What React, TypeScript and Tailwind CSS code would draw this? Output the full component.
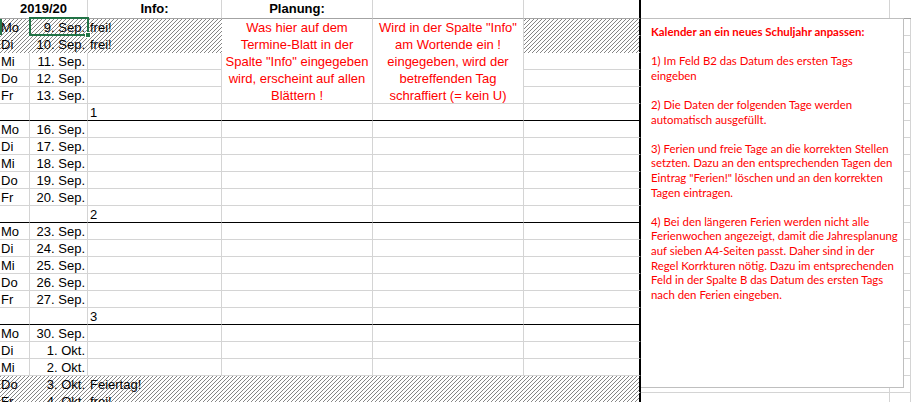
type Day = { day: string; date: string; info?: string; off?: boolean };
type Week = { nr?: number; days: Day[] };

const weeks: Week[] = [
  {
    nr: 1,
    days: [
      { day: 'Mo', date: '9. Sep.', info: 'frei!', off: true },
      { day: 'Di', date: '10. Sep.', info: 'frei!', off: true },
      { day: 'Mi', date: '11. Sep.' },
      { day: 'Do', date: '12. Sep.' },
      { day: 'Fr', date: '13. Sep.' },
    ],
  },
  {
    nr: 2,
    days: [
      { day: 'Mo', date: '16. Sep.' },
      { day: 'Di', date: '17. Sep.' },
      { day: 'Mi', date: '18. Sep.' },
      { day: 'Do', date: '19. Sep.' },
      { day: 'Fr', date: '20. Sep.' },
    ],
  },
  {
    nr: 3,
    days: [
      { day: 'Mo', date: '23. Sep.' },
      { day: 'Di', date: '24. Sep.' },
      { day: 'Mi', date: '25. Sep.' },
      { day: 'Do', date: '26. Sep.' },
      { day: 'Fr', date: '27. Sep.' },
    ],
  },
  {
    days: [
      { day: 'Mo', date: '30. Sep.' },
      { day: 'Di', date: '1. Okt.' },
      { day: 'Mi', date: '2. Okt.' },
      { day: 'Do', date: '3. Okt.', info: 'Feiertag!', off: true },
      { day: 'Fr', date: '4. Okt.', info: 'frei!', off: true },
    ],
  },
];

const noteLines = [
  '',
  '1) Im Feld B2 das Datum des ersten Tags',
  'eingeben',
  '',
  '2) Die Daten der folgenden Tage werden',
  'automatisch ausgefüllt.',
  '',
  '3) Ferien und freie Tage an die korrekten Stellen',
  'setzten. Dazu an den entsprechenden Tagen den',
  'Eintrag "Ferien!" löschen und an den korrekten',
  'Tagen eintragen.',
  '',
  '4) Bei den längeren Ferien werden nicht alle',
  'Ferienwochen angezeigt, damit die Jahresplanung',
  'auf sieben A4-Seiten passt. Daher sind in der',
  'Regel Korrkturen nötig. Dazu im entsprechenden',
  'Feld in der Spalte B das Datum des ersten Tags',
  'nach den Ferien eingeben.',
];

const HATCH =
  'bg-[image:repeating-linear-gradient(135deg,#858585_0px,#858585_1px,#ffffff_1px,#ffffff_2.83px)] bg-fixed';

// one spreadsheet cell; borders are chosen as full class names
function Cell({
  hatch,
  black,
  edge,
  className = '',
  children,
}: {
  hatch?: boolean;
  black?: boolean;
  edge?: boolean;
  className?: string;
  children?: React.ReactNode;
}) {
  const right = edge
    ? 'border-r-2 border-r-black'
    : hatch
      ? 'border-r border-r-transparent'
      : 'border-r border-r-[#d4d4d4]';
  const bottom = black
    ? 'border-b border-b-black'
    : hatch
      ? 'border-b border-b-transparent'
      : 'border-b border-b-[#d4d4d4]';
  return (
    <div className={`${right} ${bottom} whitespace-nowrap ${hatch ? HATCH : ''} ${className}`}>
      {children}
    </div>
  );
}

function DayRow({ d, first, inFirstWeek }: { d: Day; first: boolean; inFirstWeek: boolean }) {
  const h = !!d.off;
  return (
    <>
      <Cell hatch={h} className="pl-[1px]">{d.day}</Cell>
      <Cell hatch={h} className="pr-[2px] text-right">{d.date}</Cell>
      <Cell hatch={h} className="pl-[2px]">{d.info}</Cell>
      {inFirstWeek ? (
        first && (
          <>
            <Cell className="row-span-5 text-center text-[#ff0000]">
              Was hier auf dem
              <br />
              Termine-Blatt in der
              <br />
              Spalte "Info" eingegeben
              <br />
              wird, erscheint auf allen
              <br />
              Blättern !
            </Cell>
            <Cell className="row-span-5 text-center text-[#ff0000]">
              Wird in der Spalte "Info"
              <br />
              am Wortende ein !
              <br />
              eingegeben, wird der
              <br />
              betreffenden Tag
              <br />
              schraffiert (= kein U)
            </Cell>
          </>
        )
      ) : (
        <>
          <Cell hatch={h} />
          <Cell hatch={h} />
        </>
      )}
      <Cell hatch={h} edge />
      <Cell />
      <Cell />
    </>
  );
}

function WeekRow({ nr }: { nr: number }) {
  return (
    <>
      <Cell black />
      <Cell black />
      <Cell black className="pl-[2px]">{nr}</Cell>
      <Cell black />
      <Cell black />
      <Cell black edge />
      <Cell />
      <Cell />
    </>
  );
}

export default function App() {
  return (
    <div className="relative w-[911px] h-[402px] overflow-hidden bg-white font-['Liberation_Sans',Arial,sans-serif] text-[13px] leading-[17px] text-black">
      <div className="grid grid-cols-[30px_58px_134px_151px_151px_117px_249px_1fr] grid-rows-[19px] auto-rows-[17px]">
        {/* header */}
        <div className="col-span-2 border-r border-b border-r-[#d4d4d4] border-b-[#a3a3a3] text-center font-bold leading-[18px]">
          2019/20
        </div>
        <div className="border-r border-b border-r-[#d4d4d4] border-b-[#a3a3a3] text-center font-bold leading-[18px]">
          Info:
        </div>
        <div className="border-r border-b border-r-[#d4d4d4] border-b-[#a3a3a3] text-center font-bold leading-[18px]">
          Planung:
        </div>
        <div className="border-r border-b border-r-[#d4d4d4] border-b-[#a3a3a3]" />
        <div className="border-r-2 border-b border-r-black border-b-[#a3a3a3]" />
        <div className="border-r border-b border-r-[#d4d4d4] border-b-[#a3a3a3]" />
        <div className="border-b border-b-[#a3a3a3]" />

        {weeks.map((w, wi) => (
          <div key={wi} className="contents">
            {w.days.map((d, di) => (
              <DayRow key={di} d={d} first={di === 0} inFirstWeek={wi === 0} />
            ))}
            {w.nr !== undefined && <WeekRow nr={w.nr} />}
          </div>
        ))}
      </div>

      {/* active cell B2 */}
      <div className="absolute left-0 top-[19px] w-[2px] h-[16px] bg-[#217346]" />
      <div className="absolute left-[29px] top-[17px] w-[60px] h-[19px] border-2 border-[#217346]" />
      <div className="absolute left-[85px] top-[32px] w-[6px] h-[6px] bg-[#217346] border border-white" />

      {/* cell comment */}
      <div className="absolute left-[641px] top-[18px] w-[263px] h-[370px] border border-l-0 border-[#bfbfbf] bg-white pl-[10px] pt-[6px] font-['Lato',sans-serif] text-[11.4px] leading-[14.6px] text-[#ff0000]">
        <div className="font-bold whitespace-pre">Kalender an ein neues Schuljahr anpassen:</div>
        {noteLines.map((l, i) => (
          <div key={i} className="h-[14.6px] whitespace-pre">
            {l}
          </div>
        ))}
      </div>
    </div>
  );
}
